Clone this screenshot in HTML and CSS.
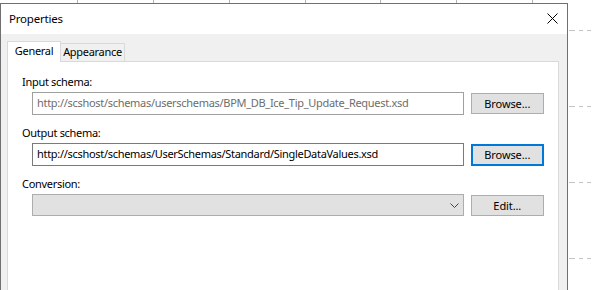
FILE: index.html
```html
<!DOCTYPE html>
<html lang="en">
<head>
  <meta charset="UTF-8">
  <title>Properties</title>
  <link rel="stylesheet" href="styles.css">
</head>
<body>

  <div class="canvas">
    <!-- background grid of the designer surface -->
    <div class="tick" style="left: 77px"></div>
    <div class="tick" style="left: 153px"></div>
    <div class="tick" style="left: 229px"></div>
    <div class="tick" style="left: 305px"></div>
    <div class="tick" style="left: 380px"></div>
    <div class="tick" style="left: 456px"></div>
    <div class="tick" style="left: 532px"></div>
    <div class="dash" style="top: 30px"></div>
    <div class="dash" style="top: 106px"></div>
    <div class="dash" style="top: 182px"></div>
    <div class="dash" style="top: 258px"></div>

    <!-- Dialog -->
    <div class="dialog">
      <div class="titlebar">
        <span class="title">Properties</span>
        <svg class="close" width="11" height="11" viewBox="0 0 11 11">
          <path d="M0.5 0.5 L10.5 10.5 M10.5 0.5 L0.5 10.5" stroke="#000" stroke-width="1" fill="none"/>
        </svg>
      </div>

      <div class="dialog-body">
        <div class="tabs">
          <div class="tab active">General</div>
          <div class="tab">Appearance</div>
        </div>

        <div class="panel">
          <div class="label">Input schema:</div>
          <div class="row">
            <div class="field disabled">http://scshost/schemas/userschemas/BPM_DB_Ice_Tip_Update_Request.xsd</div>
            <button class="btn">Browse...</button>
          </div>

          <div class="label">Output schema:</div>
          <div class="row">
            <div class="field">http://scshost/schemas/UserSchemas/Standard/SingleDataValues.xsd</div>
            <button class="btn focused">Browse...</button>
          </div>

          <div class="label">Conversion:</div>
          <div class="row">
            <div class="combo">
              <svg width="9" height="5" viewBox="0 0 9 5">
                <path d="M0.5 0.5 L4.5 4.5 L8.5 0.5" stroke="#444" stroke-width="1" fill="none"/>
              </svg>
            </div>
            <button class="btn">Edit...</button>
          </div>
        </div>
      </div>
    </div>
  </div>

</body>
</html>
```

FILE: styles.css
```css
* {
  margin: 0;
  padding: 0;
  box-sizing: border-box;
}

body {
  font-family: 'Noto Sans', 'Liberation Sans', sans-serif;
  font-size: 11px;
  letter-spacing: -0.3px;
  color: #000;
  background-color: #fff;
}

.canvas {
  position: relative;
  width: 594px;
  height: 290px;
  overflow: hidden;
  padding-top: 3px;
}

/* Designer grid marks */
.tick {
  position: absolute;
  top: 0;
  width: 1px;
  height: 3px;
  background-color: #b4b4b4;
}

.dash {
  position: absolute;
  left: 568px;
  width: 26px;
  height: 1px;
  background-image: repeating-linear-gradient(to right, #c4c4c4 0 4px, transparent 4px 8px);
  background-position: 3px 0;
}

/* Dialog */
.dialog {
  width: 568px;
  height: 300px;
  border: 1px solid #707070;
  border-bottom: none;
  background-color: #f0f0f0;
}

.titlebar {
  height: 30px;
  background-color: #fff;
  display: flex;
  justify-content: space-between;
  align-items: center;
  padding: 0 9px 0 8px;
}

.titlebar .title {
  font-size: 11.5px;
  letter-spacing: -0.2px;
  margin-top: -1px;
}

.titlebar .close {
  display: block;
  margin-top: -1px;
}

.dialog-body {
  padding: 7px 8px 0 6px;
}

/* Tabs */
.tabs {
  display: flex;
  align-items: flex-end;
  height: 20px;
}

.tab {
  height: 18px;
  border: 1px solid #d9d9d9;
  border-bottom: none;
  background-color: #f0f0f0;
  line-height: 16px;
  width: 65px;
  text-align: center;
}

.tab.active {
  position: relative;
  width: 54px;
  height: 21px;
  margin-bottom: -1px;
  margin-right: -1px;
  background-color: #fff;
  line-height: 18px;
}

.panel {
  height: 240px;
  background-color: #fff;
  border: 1px solid #d9d9d9;
  padding: 12px 14px 0 14px;
}

.panel .label {
  line-height: 15px;
  margin-bottom: 3px;
}

.panel .row {
  display: flex;
  align-items: center;
  gap: 7px;
  margin-left: 10px;
  margin-bottom: 10px;
}

.field {
  width: 435px;
  height: 23px;
  border: 1px solid #7a7a7a;
  background-color: #fff;
  padding-left: 4px;
  line-height: 20px;
  white-space: nowrap;
  overflow: hidden;
}

.field.disabled {
  border-color: #a0a0a0;
  color: #6d6d6d;
}

.combo {
  width: 435px;
  height: 22px;
  border: 1px solid #adadad;
  background-color: #e1e1e1;
  display: flex;
  justify-content: flex-end;
  align-items: center;
  padding-right: 4px;
}

.combo svg {
  display: block;
}

.btn {
  width: 74px;
  height: 21px;
  border: 1px solid #adadad;
  background-color: #e1e1e1;
  font-family: inherit;
  font-size: 11px;
  letter-spacing: -0.1px;
  color: #000;
}

.btn.focused {
  border: 2px solid #0078d7;
  height: 22px;
}
```
